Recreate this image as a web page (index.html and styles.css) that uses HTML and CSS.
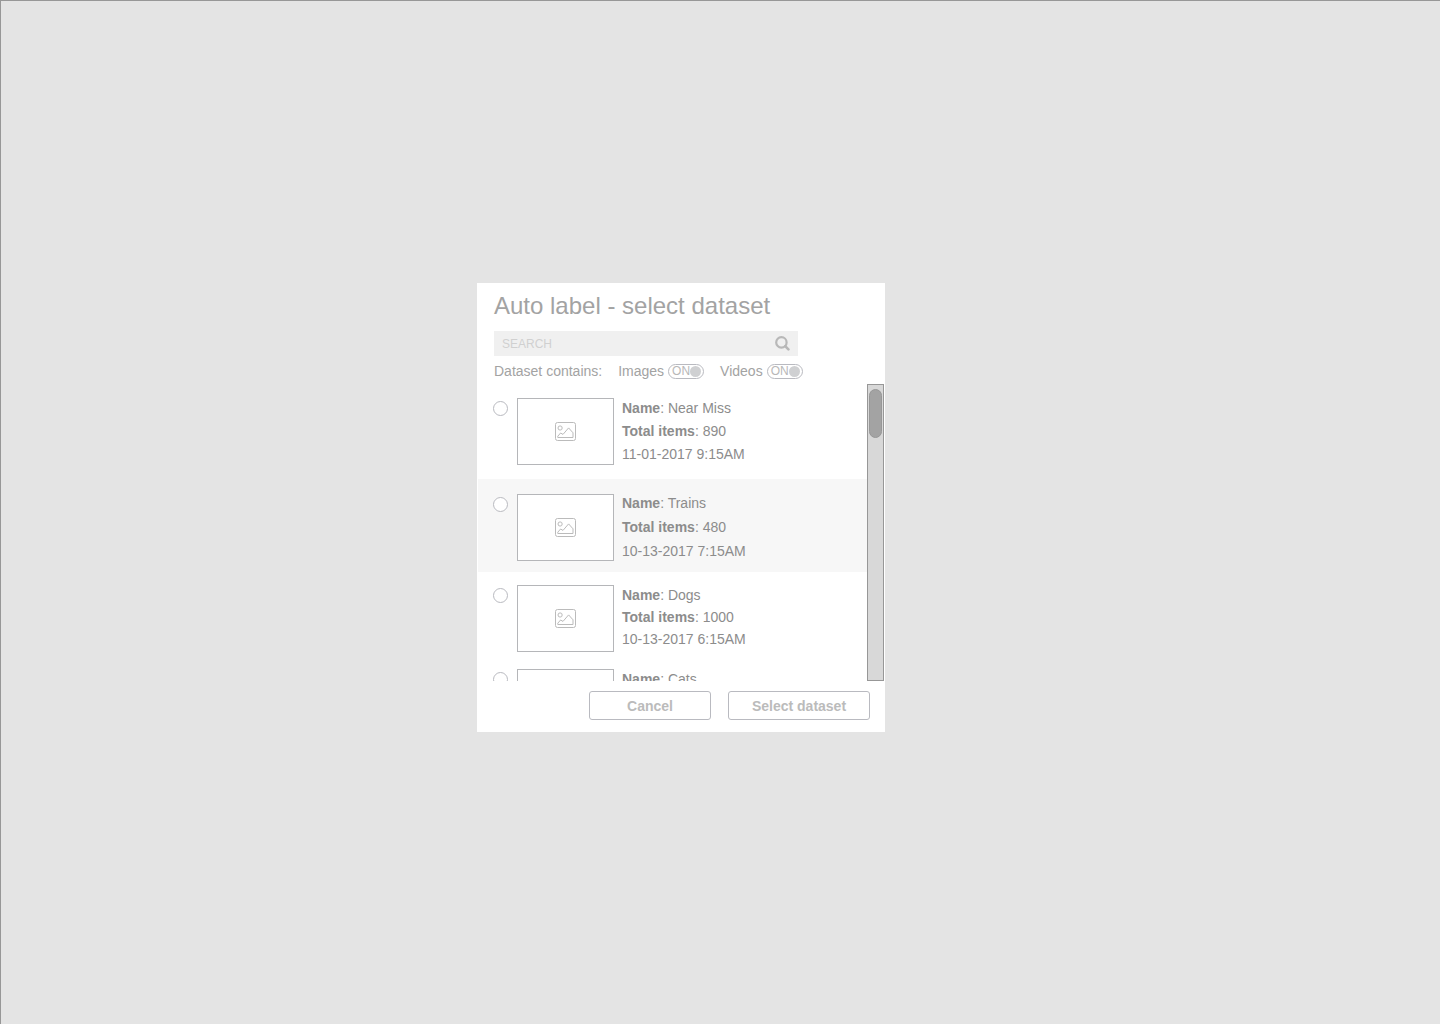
FILE: index.html
```html
<!DOCTYPE html>
<html lang="en">
<head>
<meta charset="utf-8">
<title>Auto label - select dataset</title>
<meta name="viewport" content="width=device-width, initial-scale=1">
<link rel="stylesheet" href="styles.css">
</head>
<body>
<svg width="0" height="0" class="sprite" aria-hidden="true">
  <symbol id="picture" viewBox="0 0 21 19">
    <g fill="none" stroke="#bbbbbb" stroke-width="1" stroke-linejoin="round">
      <rect x="0.5" y="0.5" width="20" height="18" rx="2"/>
      <circle cx="5.1" cy="6" r="2.1"/>
      <path d="M2.8 15.5V14.2L5.6 11L8 12.4L13.6 5.9L18 10.8V15.5Z"/>
    </g>
  </symbol>
</svg>
<main class="backdrop">
  <form class="dialog" role="dialog" aria-labelledby="dialog-title">
    <header class="dialog-head">
      <h1 class="title" id="dialog-title">Auto label - select dataset</h1>
      <div class="search">
        <input class="search-input" type="text" placeholder="SEARCH" aria-label="Search">
        <svg class="search-icon" viewBox="0 0 16 16" aria-hidden="true">
          <g fill="none" stroke="#b8b8b8"><circle cx="7.4" cy="6.4" r="5.2" stroke-width="2.2"/><path d="M11.2 10.2L14.4 13.4" stroke-width="2.6" stroke-linecap="round"/></g>
        </svg>
      </div>
      <div class="filters">
        <span class="filters-label">Dataset contains:</span>
        <label class="filter">Images <span class="switch">ON<input class="knob" type="checkbox" checked></span></label>
        <label class="filter">Videos <span class="switch">ON<input class="knob" type="checkbox" checked></span></label>
      </div>
    </header>
    <div class="scroller">
      <div class="list">
        <label class="row">
          <input class="radio" type="radio" name="dataset">
          <span class="thumb"><svg class="picture"><use href="#picture"/></svg></span>
          <span class="info"><span><b>Name</b>: Near Miss</span><span><b>Total items</b>: 890</span><span>11-01-2017 9:15AM</span></span>
        </label>
        <label class="row row-shaded">
          <input class="radio" type="radio" name="dataset">
          <span class="thumb"><svg class="picture"><use href="#picture"/></svg></span>
          <span class="info"><span><b>Name</b>: Trains</span><span><b>Total items</b>: 480</span><span>10-13-2017 7:15AM</span></span>
        </label>
        <label class="row row-compact">
          <input class="radio" type="radio" name="dataset">
          <span class="thumb"><svg class="picture"><use href="#picture"/></svg></span>
          <span class="info"><span><b>Name</b>: Dogs</span><span><b>Total items</b>: 1000</span><span>10-13-2017 6:15AM</span></span>
        </label>
        <label class="row row-compact">
          <input class="radio" type="radio" name="dataset">
          <span class="thumb"></span>
          <span class="info"><span><b>Name</b>: Cats</span></span>
        </label>
      </div>
      <div class="scrollbar"><div class="scrollbar-thumb"></div></div>
    </div>
    <footer class="actions">
      <button class="button" type="button">Cancel</button>
      <button class="button button-wide" type="submit">Select dataset</button>
    </footer>
  </form>
</main>
</body>
</html>
```
FILE: styles.css
```css
* { box-sizing: border-box; }

body {
  margin: 0;
  font-family: "Liberation Sans", Arial, sans-serif;
  font-size: 14px;
  color: #8c8c8c;
}

.sprite { position: absolute; }

.backdrop {
  min-height: 100vh;
  display: flex;
  align-items: center;
  justify-content: center;
  padding: 0 79px 10px 0;
  background: #e4e4e4;
  border-top: 1px solid #979797;
  border-left: 1px solid #979797;
}

.dialog {
  width: 100%;
  max-width: 408px;
  background: #fff;
}

.dialog-head { padding: 8px 17px 0; }

.title {
  margin: 0 0 10px;
  font-size: 24px;
  line-height: 30px;
  font-weight: normal;
  color: #a3a3a3;
}

.search {
  display: flex;
  align-items: center;
  max-width: 304px;
  height: 25px;
  padding: 0 8px;
  background: #f0f0f0;
}

.search-input {
  flex: 1;
  min-width: 0;
  padding: 0;
  border: 0;
  background: none;
  font: 12px "Liberation Sans", Arial, sans-serif;
  color: #8c8c8c;
}

.search-input::placeholder { color: #d0d0d0; opacity: 1; }

.search-icon { width: 16px; height: 16px; }

.filters {
  display: flex;
  align-items: center;
  gap: 16px;
  height: 28px;
  padding-top: 2px;
  color: #a3a3a3;
}

.filter {
  display: flex;
  align-items: center;
  gap: 4px;
}

.switch {
  display: flex;
  align-items: center;
  width: 36px;
  height: 15px;
  padding-left: 3px;
  border: 1px solid #b9bac0;
  border-radius: 8px;
  font-size: 12px;
  line-height: 15px;
  color: #b8b8b8;
}

.knob {
  appearance: none;
  width: 11px;
  height: 11px;
  margin: 0;
  border-radius: 50%;
  background: #cfd0d2;
}

.scroller {
  display: flex;
  height: 297px;
  padding: 0 1px;
}

.list {
  flex: 1;
  overflow: hidden;
}

.row {
  display: flex;
  align-items: flex-start;
  height: 95px;
  padding: 14px 15px 0;
}

.row-shaded {
  height: 93px;
  padding-top: 15px;
  background: #f7f7f7;
}

.row-compact {
  height: 84px;
  padding-top: 13px;
}

.radio {
  appearance: none;
  width: 15px;
  height: 15px;
  margin: 3px 9px 0 0;
  border: 1px solid #b9bac0;
  border-radius: 50%;
  background: #fff;
}

.thumb {
  display: flex;
  align-items: center;
  justify-content: center;
  width: 97px;
  height: 67px;
  border: 1px solid #b5b6b9;
  background: #fff;
}

.picture { width: 21px; height: 19px; }

.info {
  display: flex;
  flex-direction: column;
  margin-top: -1px;
  padding-left: 8px;
  line-height: 23px;
}

.row-shaded .info { margin-top: -3px; line-height: 24px; }

.row-compact .info { line-height: 22px; }

.scrollbar {
  width: 17px;
  padding: 4px 1px;
  border: 1px solid #979797;
  background: #d8d8d8;
}

.scrollbar-thumb {
  height: 49px;
  border: 1px solid #979797;
  border-radius: 7px;
  background: #a3a3a3;
}

.actions {
  display: flex;
  justify-content: flex-end;
  gap: 17px;
  padding: 10px 15px 12px;
}

.button {
  width: 122px;
  height: 29px;
  padding: 0;
  border: 1px solid #b9bac0;
  border-radius: 3px;
  background: #fff;
  font: bold 14px "Liberation Sans", Arial, sans-serif;
  color: #bbb;
}

.button-wide { width: 142px; }
```
